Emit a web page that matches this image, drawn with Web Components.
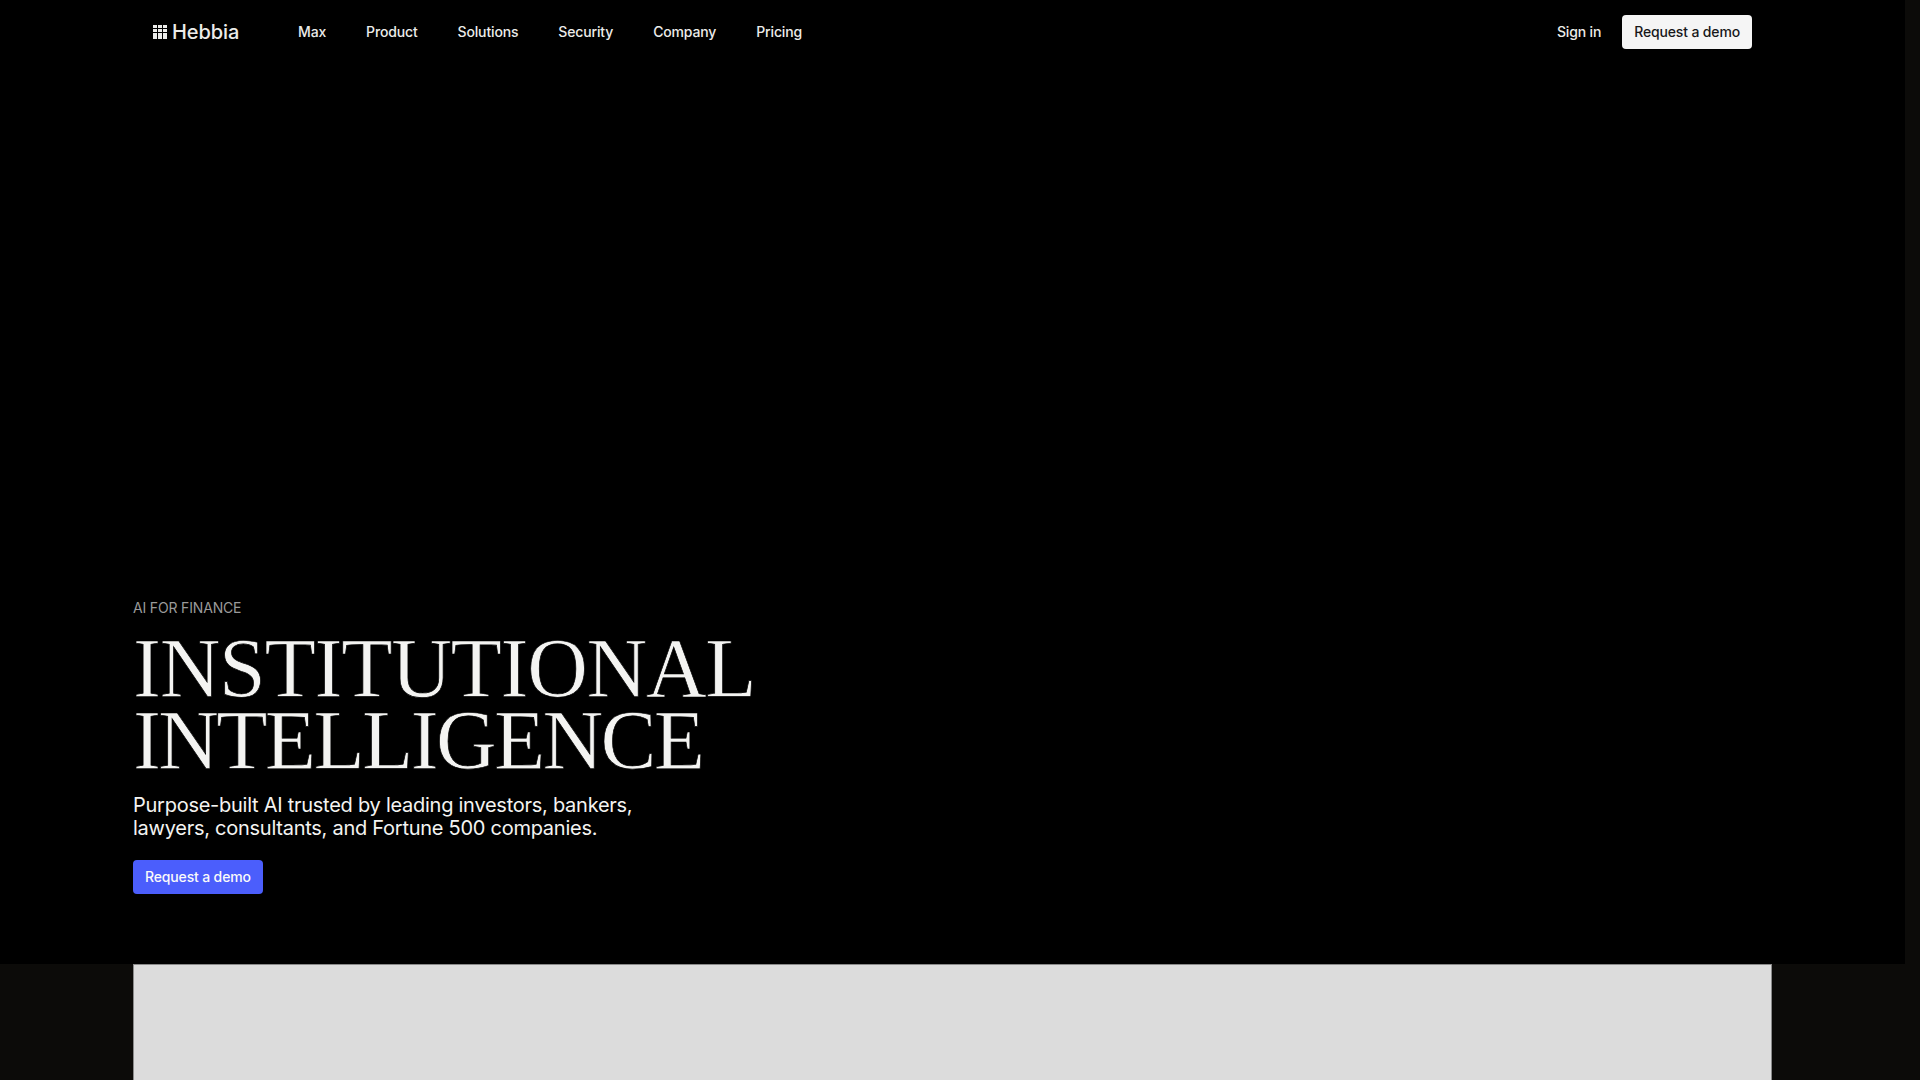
<!DOCTYPE html>
<html lang="en">
<head>
<meta charset="utf-8">
<title>Hebbia</title>
<style>
  html, body { margin: 0; height: 100%; overflow: hidden; background: #0c0b09; }
  body { font-family: Inter, "Liberation Sans", sans-serif; }
</style>
</head>
<body>
<hb-page>
  <hb-hero>
    <hb-nav slot="nav"></hb-nav>
    <span slot="eyebrow">AI FOR FINANCE</span>
    <span slot="title" style="letter-spacing:-1.3px">INSTITUTIONAL</span>
    <span slot="title2" style="letter-spacing:-2.7px">INTELLIGENCE</span>
    <span slot="lead">Purpose-built AI trusted by leading investors, bankers,<br>lawyers, consultants, and Fortune 500 companies.</span>
    <hb-button slot="cta" variant="primary">Request a demo</hb-button>
  </hb-hero>
  <hb-panel></hb-panel>
</hb-page>

<script>
// Page shell
class HbPage extends HTMLElement {
  constructor() {
    super();
    this.attachShadow({ mode: "open" });
    this.shadowRoot.innerHTML = `
    <style>
      :host { display: block; height: 1080px; overflow: hidden; background: #0c0b09; }
    </style>
    <slot></slot>
    `;
  }
}

// Button, white by default
class HbButton extends HTMLElement {
  constructor() {
    super();
    this.attachShadow({ mode: "open" });
    this.shadowRoot.innerHTML = `
    <style>
      :host {
        display: inline-flex;
        align-items: center;
        height: 34px;
        padding: 0 12px 2px;
        box-sizing: border-box;
        border-radius: 4px;
        background: #f5f5f5;
        color: #18181a;
        font-size: 14px;
        font-weight: 500;
        letter-spacing: -0.15px;
        white-space: nowrap;
      }
      :host([variant="primary"]) { background: #4b5efc; color: #fafafa; }
    </style>
    <slot></slot>
    `;
  }
}

// Top navigation
class HbNav extends HTMLElement {
  constructor() {
    super();
    this.attachShadow({ mode: "open" });
    this.shadowRoot.innerHTML = `
    <style>
      :host {
        display: flex;
        align-items: center;
        height: 64px;
        padding: 0 20px 0 153px;
        color: #ececea;
        font-size: 14px;
        font-weight: 500;
        letter-spacing: -0.15px;
      }
      .logo { display: flex; align-items: center; gap: 5px; width: 145px; font-size: 20px; letter-spacing: -0.1px; }
      .links { display: flex; gap: 40px; flex: 1; }
      .links span, .right span { padding-bottom: 2px; }
      .right { display: flex; align-items: center; gap: 21px; margin-right: 133px; }
      svg { display: block; }
    </style>
    <div class="logo">
      <svg width="14" height="14" viewBox="0 0 14 14" fill="#ececea">
        <rect x="0" y="0" width="4" height="3"/><rect x="5" y="0" width="4" height="3"/><rect x="10" y="0" width="4" height="3"/>
        <rect x="0" y="4" width="4" height="3"/><rect x="5" y="4" width="4" height="3"/><rect x="10" y="4" width="4" height="3"/>
        <rect x="0" y="8" width="4" height="6"/><rect x="5" y="8" width="4" height="6"/><rect x="10" y="8" width="4" height="6"/>
      </svg>
      <span>Hebbia</span>
    </div>
    <div class="links">
      <span>Max</span><span>Product</span><span>Solutions</span><span>Security</span><span>Company</span><span>Pricing</span>
    </div>
    <div class="right">
      <span>Sign in</span>
      <hb-button>Request a demo</hb-button>
    </div>
    `;
  }
}

// Black hero with the copy at its foot
class HbHero extends HTMLElement {
  constructor() {
    super();
    this.attachShadow({ mode: "open" });
    this.shadowRoot.innerHTML = `
    <style>
      :host {
        display: flex;
        flex-direction: column;
        width: 1905px;
        height: 964px;
        background: #000;
        color: #f4f4f2;
      }
      .copy {
        margin-top: auto;
        display: flex;
        flex-direction: column;
        align-items: flex-start;
        padding: 0 0 70px 133px;
      }
      .eyebrow { font-size: 14px; line-height: 20px; color: #9a9a9a; letter-spacing: -0.17px; }
      .title {
        margin-top: 15px;
        font-family: "Liberation Serif", serif;
        font-size: 84px;
        line-height: 72px;
        font-weight: 400;
        color: #f4f4f2;
        -webkit-text-stroke: 0.7px #000;
      }
      .title div { height: 72px; white-space: nowrap; }
      .lead { margin-top: 17px; font-size: 20px; line-height: 23px; color: #f4f4f2; letter-spacing: -0.26px; }
      .cta { margin-top: 20px; display: block; }
    </style>
    <slot name="nav"></slot>
    <div class="copy">
      <div class="eyebrow"><slot name="eyebrow"></slot></div>
      <div class="title">
        <div><slot name="title"></slot></div>
        <div><slot name="title2"></slot></div>
      </div>
      <div class="lead"><slot name="lead"></slot></div>
      <div class="cta"><slot name="cta"></slot></div>
    </div>
    `;
  }
}

// Grey media placeholder under the hero
class HbPanel extends HTMLElement {
  constructor() {
    super();
    this.attachShadow({ mode: "open" });
    this.shadowRoot.innerHTML = `
    <style>
      :host {
        display: block;
        width: 1639px;
        height: 200px;
        margin-left: 133px;
        box-sizing: border-box;
        background: #dcdcdc;
        border: 1px solid #8a8a8a;
        border-bottom: 0;
      }
    </style>
    `;
  }
}

customElements.define("hb-page", HbPage);
customElements.define("hb-button", HbButton);
customElements.define("hb-nav", HbNav);
customElements.define("hb-hero", HbHero);
customElements.define("hb-panel", HbPanel);
</script>
</body>
</html>
